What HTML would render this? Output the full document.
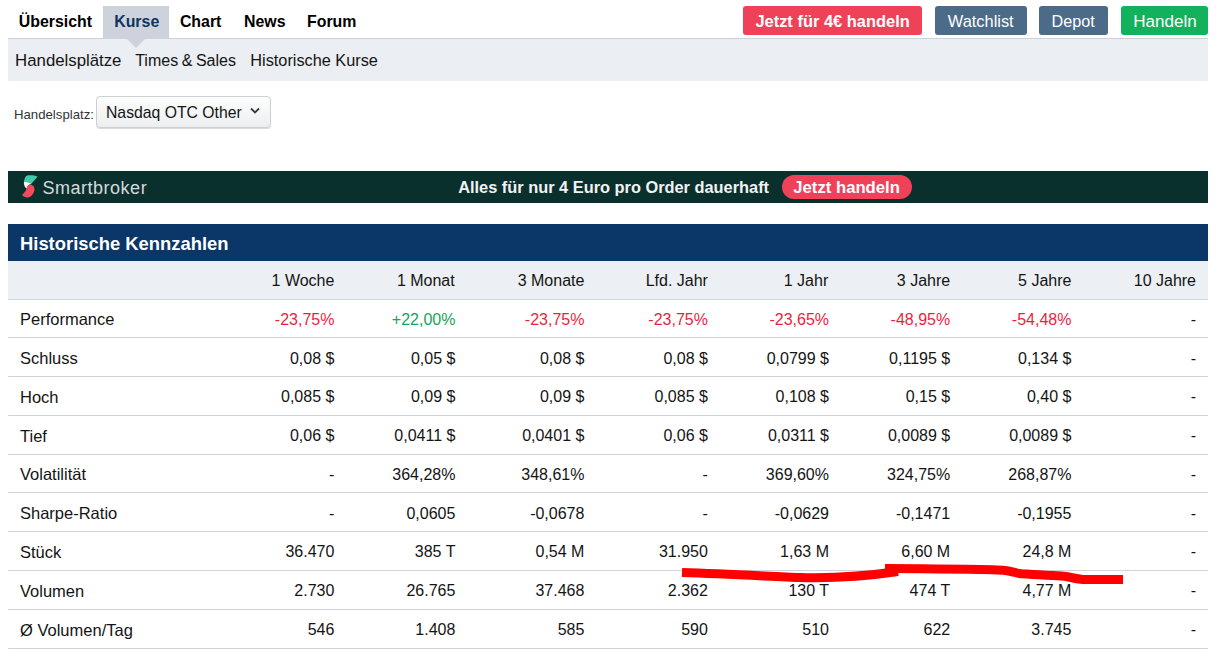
<!DOCTYPE html>
<html><head><meta charset="utf-8"><style>
html,body{margin:0;padding:0;background:#fff;width:1230px;height:669px;overflow:hidden;position:relative;font-family:"Liberation Sans",sans-serif;}
.t{position:absolute;white-space:nowrap;line-height:1;}
.b{position:absolute;}
</style></head><body>
<div class="b" style="left:8px;top:38px;width:1200px;height:43px;background:#ebeef2"></div>
<div class="b" style="left:8px;top:38px;width:1200px;height:1px;background:#cdd1d6"></div>
<div class="b" style="left:103px;top:6px;width:66px;height:33px;background:#cdd2dc"></div>
<div class="b" style="left:126.5px;top:39px;width:0;height:0;border-left:9px solid transparent;border-right:9px solid transparent;border-top:9px solid #cdd2dc"></div>
<div class="t" style="left:18.80px;top:14.34px;font-size:15.9px;font-weight:700;color:#000;">Übersicht</div>
<div class="t" style="left:114.20px;top:14.34px;font-size:15.9px;font-weight:700;color:#10355f;">Kurse</div>
<div class="t" style="left:179.90px;top:14.34px;font-size:15.9px;font-weight:700;color:#000;">Chart</div>
<div class="t" style="left:244.00px;top:14.34px;font-size:15.9px;font-weight:700;color:#000;">News</div>
<div class="t" style="left:307.00px;top:14.34px;font-size:15.9px;font-weight:700;color:#000;">Forum</div>
<div class="b" style="left:743px;top:6px;width:179px;height:29px;background:#ef4259;border-radius:3px"></div>
<div class="t" style="left:755.40px;top:12.68px;font-size:16.45px;font-weight:700;color:#fff;">Jetzt für 4€ handeln</div>
<div class="b" style="left:935px;top:6px;width:92px;height:29px;background:#4c6b89;border-radius:3px"></div>
<div class="t" style="left:947.80px;top:12.72px;font-size:16.4px;font-weight:400;color:#fff;">Watchlist</div>
<div class="b" style="left:1039px;top:6px;width:69px;height:29px;background:#4c6b89;border-radius:3px"></div>
<div class="t" style="left:1051.50px;top:12.89px;font-size:16.2px;font-weight:400;color:#fff;">Depot</div>
<div class="b" style="left:1121px;top:6px;width:87px;height:29px;background:#12b15c;border-radius:3px"></div>
<div class="t" style="left:1133.20px;top:12.72px;font-size:17.1px;font-weight:400;color:#fff;">Handeln</div>
<div class="t" style="left:15.10px;top:52.58px;font-size:16.8px;font-weight:400;color:#141414;">Handelsplätze</div>
<div class="t" style="left:135.20px;top:52.66px;font-size:16.0px;font-weight:400;color:#141414;word-spacing:-0.9px;">Times &amp; Sales</div>
<div class="t" style="left:250.30px;top:52.40px;font-size:16.3px;font-weight:400;color:#141414;">Historische Kurse</div>
<div class="t" style="left:14.00px;top:108.03px;font-size:13.2px;font-weight:400;color:#333;">Handelsplatz:</div>
<div class="b" style="left:96px;top:96px;width:173px;height:30px;border:1px solid #cdcfd2;border-radius:4px;background:linear-gradient(#fdfdfd,#eceef0);box-shadow:0 1px 0 #d8dadc"></div>
<div class="t" style="left:106.00px;top:104.67px;font-size:15.75px;font-weight:400;color:#141414;">Nasdaq OTC Other</div>
<svg class="b" style="left:249px;top:106px" width="12" height="9" viewBox="0 0 12 9"><path d="M2 2.5 L6 6.5 L10 2.5" fill="none" stroke="#3c3c3c" stroke-width="1.8"/></svg>
<div class="b" style="left:8px;top:171px;width:1200px;height:32px;background:#0a302e"></div>
<svg class="b" style="left:16px;top:172px" width="28" height="30" viewBox="0 0 28 30">
<path d="M8 9.5 C8.5 6 9.5 4 11 3.5 C15 3 19 3.5 21.5 4.5 C19.5 7 17.5 9.5 15.5 11.5 C13 10.5 10.5 10 8 9.5 Z" fill="#3fcaa8"/>
<path d="M8 9.5 C10.5 10 13 10.5 15.5 11.5 L13.5 12.5 C12 13.5 11 15 10.5 16.5 C8.5 15 7.5 12 8 9.5 Z" fill="#f4f4f4"/>
<path d="M13.5 12.5 C16 12.5 18.5 14 18.5 17 C18.5 21 15.5 25 12 25.5 C9.5 25.8 7.5 24.5 6 23 C8 21 10 19 10.5 16.5 C11 15 12 13.5 13.5 12.5 Z" fill="#f04a5c"/>
</svg>
<div class="t" style="left:42.60px;top:179.36px;font-size:18.0px;font-weight:400;color:#d6dada;letter-spacing:0.5px;">Smartbroker</div>
<div class="t" style="left:458.20px;top:178.95px;font-size:16.36px;font-weight:700;color:#f2f2f2;">Alles für nur 4 Euro pro Order dauerhaft</div>
<div class="b" style="left:782px;top:175px;width:130px;height:24px;background:#ef4259;border-radius:12px"></div>
<div class="t" style="left:793.30px;top:179.66px;font-size:16.7px;font-weight:700;color:#fff;">Jetzt handeln</div>
<div class="b" style="left:8px;top:224px;width:1200px;height:37px;background:#0a3668"></div>
<div class="t" style="left:20.00px;top:234.92px;font-size:18.4px;font-weight:700;color:#fff;">Historische Kennzahlen</div>
<div class="b" style="left:8px;top:261px;width:1200px;height:38px;background:#eceff3"></div>
<div class="t" style="right:895.60px;top:272.66px;font-size:16px;font-weight:400;color:#141414;text-align:right;">1 Woche</div>
<div class="t" style="right:775.30px;top:272.66px;font-size:16px;font-weight:400;color:#141414;text-align:right;">1 Monat</div>
<div class="t" style="right:645.60px;top:272.66px;font-size:16px;font-weight:400;color:#141414;text-align:right;">3 Monate</div>
<div class="t" style="right:522.10px;top:272.66px;font-size:16px;font-weight:400;color:#141414;text-align:right;">Lfd. Jahr</div>
<div class="t" style="right:401.80px;top:272.66px;font-size:16px;font-weight:400;color:#141414;text-align:right;">1 Jahr</div>
<div class="t" style="right:279.80px;top:272.66px;font-size:16px;font-weight:400;color:#141414;text-align:right;">3 Jahre</div>
<div class="t" style="right:158.60px;top:272.66px;font-size:16px;font-weight:400;color:#141414;text-align:right;">5 Jahre</div>
<div class="t" style="right:34.00px;top:272.66px;font-size:16px;font-weight:400;color:#141414;text-align:right;">10 Jahre</div>
<div class="b" style="left:8px;top:337.28px;width:1200px;height:1px;background:#cfd5db"></div>
<div class="t" style="left:20.00px;top:311.33px;font-size:16.5px;font-weight:400;color:#141414;">Performance</div>
<div class="t" style="right:895.60px;top:311.76px;font-size:16px;font-weight:400;color:#ea1f3f;text-align:right;">-23,75%</div>
<div class="t" style="right:774.60px;top:311.76px;font-size:16px;font-weight:400;color:#17a35c;text-align:right;">+22,00%</div>
<div class="t" style="right:645.60px;top:311.76px;font-size:16px;font-weight:400;color:#ea1f3f;text-align:right;">-23,75%</div>
<div class="t" style="right:522.10px;top:311.76px;font-size:16px;font-weight:400;color:#ea1f3f;text-align:right;">-23,75%</div>
<div class="t" style="right:401.00px;top:311.76px;font-size:16px;font-weight:400;color:#ea1f3f;text-align:right;">-23,65%</div>
<div class="t" style="right:279.80px;top:311.76px;font-size:16px;font-weight:400;color:#ea1f3f;text-align:right;">-48,95%</div>
<div class="t" style="right:158.60px;top:311.76px;font-size:16px;font-weight:400;color:#ea1f3f;text-align:right;">-54,48%</div>
<div class="t" style="right:34.00px;top:311.76px;font-size:16px;font-weight:400;color:#141414;text-align:right;">-</div>
<div class="b" style="left:8px;top:376.06px;width:1200px;height:1px;background:#cfd5db"></div>
<div class="t" style="left:20.00px;top:350.11px;font-size:16.5px;font-weight:400;color:#141414;">Schluss</div>
<div class="t" style="right:895.60px;top:350.54px;font-size:16px;font-weight:400;color:#141414;text-align:right;">0,08 $</div>
<div class="t" style="right:774.60px;top:350.54px;font-size:16px;font-weight:400;color:#141414;text-align:right;">0,05 $</div>
<div class="t" style="right:645.60px;top:350.54px;font-size:16px;font-weight:400;color:#141414;text-align:right;">0,08 $</div>
<div class="t" style="right:522.10px;top:350.54px;font-size:16px;font-weight:400;color:#141414;text-align:right;">0,08 $</div>
<div class="t" style="right:401.00px;top:350.54px;font-size:16px;font-weight:400;color:#141414;text-align:right;">0,0799 $</div>
<div class="t" style="right:279.80px;top:350.54px;font-size:16px;font-weight:400;color:#141414;text-align:right;">0,1195 $</div>
<div class="t" style="right:158.60px;top:350.54px;font-size:16px;font-weight:400;color:#141414;text-align:right;">0,134 $</div>
<div class="t" style="right:34.00px;top:350.54px;font-size:16px;font-weight:400;color:#141414;text-align:right;">-</div>
<div class="b" style="left:8px;top:414.84px;width:1200px;height:1px;background:#cfd5db"></div>
<div class="t" style="left:20.00px;top:388.89px;font-size:16.5px;font-weight:400;color:#141414;">Hoch</div>
<div class="t" style="right:895.60px;top:389.32px;font-size:16px;font-weight:400;color:#141414;text-align:right;">0,085 $</div>
<div class="t" style="right:774.60px;top:389.32px;font-size:16px;font-weight:400;color:#141414;text-align:right;">0,09 $</div>
<div class="t" style="right:645.60px;top:389.32px;font-size:16px;font-weight:400;color:#141414;text-align:right;">0,09 $</div>
<div class="t" style="right:522.10px;top:389.32px;font-size:16px;font-weight:400;color:#141414;text-align:right;">0,085 $</div>
<div class="t" style="right:401.00px;top:389.32px;font-size:16px;font-weight:400;color:#141414;text-align:right;">0,108 $</div>
<div class="t" style="right:279.80px;top:389.32px;font-size:16px;font-weight:400;color:#141414;text-align:right;">0,15 $</div>
<div class="t" style="right:158.60px;top:389.32px;font-size:16px;font-weight:400;color:#141414;text-align:right;">0,40 $</div>
<div class="t" style="right:34.00px;top:389.32px;font-size:16px;font-weight:400;color:#141414;text-align:right;">-</div>
<div class="b" style="left:8px;top:453.62px;width:1200px;height:1px;background:#cfd5db"></div>
<div class="t" style="left:20.00px;top:427.67px;font-size:16.5px;font-weight:400;color:#141414;">Tief</div>
<div class="t" style="right:895.60px;top:428.10px;font-size:16px;font-weight:400;color:#141414;text-align:right;">0,06 $</div>
<div class="t" style="right:774.60px;top:428.10px;font-size:16px;font-weight:400;color:#141414;text-align:right;">0,0411 $</div>
<div class="t" style="right:645.60px;top:428.10px;font-size:16px;font-weight:400;color:#141414;text-align:right;">0,0401 $</div>
<div class="t" style="right:522.10px;top:428.10px;font-size:16px;font-weight:400;color:#141414;text-align:right;">0,06 $</div>
<div class="t" style="right:401.00px;top:428.10px;font-size:16px;font-weight:400;color:#141414;text-align:right;">0,0311 $</div>
<div class="t" style="right:279.80px;top:428.10px;font-size:16px;font-weight:400;color:#141414;text-align:right;">0,0089 $</div>
<div class="t" style="right:158.60px;top:428.10px;font-size:16px;font-weight:400;color:#141414;text-align:right;">0,0089 $</div>
<div class="t" style="right:34.00px;top:428.10px;font-size:16px;font-weight:400;color:#141414;text-align:right;">-</div>
<div class="b" style="left:8px;top:492.40px;width:1200px;height:1px;background:#cfd5db"></div>
<div class="t" style="left:20.00px;top:466.45px;font-size:16.5px;font-weight:400;color:#141414;">Volatilität</div>
<div class="t" style="right:895.60px;top:466.88px;font-size:16px;font-weight:400;color:#141414;text-align:right;">-</div>
<div class="t" style="right:774.60px;top:466.88px;font-size:16px;font-weight:400;color:#141414;text-align:right;">364,28%</div>
<div class="t" style="right:645.60px;top:466.88px;font-size:16px;font-weight:400;color:#141414;text-align:right;">348,61%</div>
<div class="t" style="right:522.10px;top:466.88px;font-size:16px;font-weight:400;color:#141414;text-align:right;">-</div>
<div class="t" style="right:401.00px;top:466.88px;font-size:16px;font-weight:400;color:#141414;text-align:right;">369,60%</div>
<div class="t" style="right:279.80px;top:466.88px;font-size:16px;font-weight:400;color:#141414;text-align:right;">324,75%</div>
<div class="t" style="right:158.60px;top:466.88px;font-size:16px;font-weight:400;color:#141414;text-align:right;">268,87%</div>
<div class="t" style="right:34.00px;top:466.88px;font-size:16px;font-weight:400;color:#141414;text-align:right;">-</div>
<div class="b" style="left:8px;top:531.18px;width:1200px;height:1px;background:#cfd5db"></div>
<div class="t" style="left:20.00px;top:505.23px;font-size:16.5px;font-weight:400;color:#141414;">Sharpe-Ratio</div>
<div class="t" style="right:895.60px;top:505.66px;font-size:16px;font-weight:400;color:#141414;text-align:right;">-</div>
<div class="t" style="right:774.60px;top:505.66px;font-size:16px;font-weight:400;color:#141414;text-align:right;">0,0605</div>
<div class="t" style="right:645.60px;top:505.66px;font-size:16px;font-weight:400;color:#141414;text-align:right;">-0,0678</div>
<div class="t" style="right:522.10px;top:505.66px;font-size:16px;font-weight:400;color:#141414;text-align:right;">-</div>
<div class="t" style="right:401.00px;top:505.66px;font-size:16px;font-weight:400;color:#141414;text-align:right;">-0,0629</div>
<div class="t" style="right:279.80px;top:505.66px;font-size:16px;font-weight:400;color:#141414;text-align:right;">-0,1471</div>
<div class="t" style="right:158.60px;top:505.66px;font-size:16px;font-weight:400;color:#141414;text-align:right;">-0,1955</div>
<div class="t" style="right:34.00px;top:505.66px;font-size:16px;font-weight:400;color:#141414;text-align:right;">-</div>
<div class="b" style="left:8px;top:569.96px;width:1200px;height:1px;background:#cfd5db"></div>
<div class="t" style="left:20.00px;top:544.01px;font-size:16.5px;font-weight:400;color:#141414;">Stück</div>
<div class="t" style="right:895.60px;top:544.44px;font-size:16px;font-weight:400;color:#141414;text-align:right;">36.470</div>
<div class="t" style="right:774.60px;top:544.44px;font-size:16px;font-weight:400;color:#141414;text-align:right;">385 T</div>
<div class="t" style="right:645.60px;top:544.44px;font-size:16px;font-weight:400;color:#141414;text-align:right;">0,54 M</div>
<div class="t" style="right:522.10px;top:544.44px;font-size:16px;font-weight:400;color:#141414;text-align:right;">31.950</div>
<div class="t" style="right:401.00px;top:544.44px;font-size:16px;font-weight:400;color:#141414;text-align:right;">1,63 M</div>
<div class="t" style="right:279.80px;top:544.44px;font-size:16px;font-weight:400;color:#141414;text-align:right;">6,60 M</div>
<div class="t" style="right:158.60px;top:544.44px;font-size:16px;font-weight:400;color:#141414;text-align:right;">24,8 M</div>
<div class="t" style="right:34.00px;top:544.44px;font-size:16px;font-weight:400;color:#141414;text-align:right;">-</div>
<div class="b" style="left:8px;top:608.74px;width:1200px;height:1px;background:#cfd5db"></div>
<div class="t" style="left:20.00px;top:582.79px;font-size:16.5px;font-weight:400;color:#141414;">Volumen</div>
<div class="t" style="right:895.60px;top:583.22px;font-size:16px;font-weight:400;color:#141414;text-align:right;">2.730</div>
<div class="t" style="right:774.60px;top:583.22px;font-size:16px;font-weight:400;color:#141414;text-align:right;">26.765</div>
<div class="t" style="right:645.60px;top:583.22px;font-size:16px;font-weight:400;color:#141414;text-align:right;">37.468</div>
<div class="t" style="right:522.10px;top:583.22px;font-size:16px;font-weight:400;color:#141414;text-align:right;">2.362</div>
<div class="t" style="right:401.00px;top:583.22px;font-size:16px;font-weight:400;color:#141414;text-align:right;">130 T</div>
<div class="t" style="right:279.80px;top:583.22px;font-size:16px;font-weight:400;color:#141414;text-align:right;">474 T</div>
<div class="t" style="right:158.60px;top:583.22px;font-size:16px;font-weight:400;color:#141414;text-align:right;">4,77 M</div>
<div class="t" style="right:34.00px;top:583.22px;font-size:16px;font-weight:400;color:#141414;text-align:right;">-</div>
<div class="b" style="left:8px;top:647.52px;width:1200px;height:1px;background:#cfd5db"></div>
<div class="t" style="left:20.00px;top:621.57px;font-size:16.5px;font-weight:400;color:#141414;">Ø Volumen/Tag</div>
<div class="t" style="right:895.60px;top:622.00px;font-size:16px;font-weight:400;color:#141414;text-align:right;">546</div>
<div class="t" style="right:774.60px;top:622.00px;font-size:16px;font-weight:400;color:#141414;text-align:right;">1.408</div>
<div class="t" style="right:645.60px;top:622.00px;font-size:16px;font-weight:400;color:#141414;text-align:right;">585</div>
<div class="t" style="right:522.10px;top:622.00px;font-size:16px;font-weight:400;color:#141414;text-align:right;">590</div>
<div class="t" style="right:401.00px;top:622.00px;font-size:16px;font-weight:400;color:#141414;text-align:right;">510</div>
<div class="t" style="right:279.80px;top:622.00px;font-size:16px;font-weight:400;color:#141414;text-align:right;">622</div>
<div class="t" style="right:158.60px;top:622.00px;font-size:16px;font-weight:400;color:#141414;text-align:right;">3.745</div>
<div class="t" style="right:34.00px;top:622.00px;font-size:16px;font-weight:400;color:#141414;text-align:right;">-</div>
<div class="b" style="left:8px;top:298.5px;width:1200px;height:1px;background:#cfd4da"></div>
<svg class="b" style="left:0;top:0" width="1230" height="669" viewBox="0 0 1230 669">
<path d="M682 572.5 C730 574 775 576.6 800 577.5 C835 578.5 870 575.6 898 571.5" fill="none" stroke="#ff0000" stroke-width="9" stroke-linecap="butt"/>
<path d="M885 568.5 C930 568.7 975 569.3 1003 570.2 C1010 570.6 1014 573 1022 573.8 C1040 575 1055 575.6 1064 576.3 C1071 577 1075 579 1083 579.4 L1123 579.6" fill="none" stroke="#ff0000" stroke-width="9" stroke-linecap="butt"/>
</svg>
</body></html>
